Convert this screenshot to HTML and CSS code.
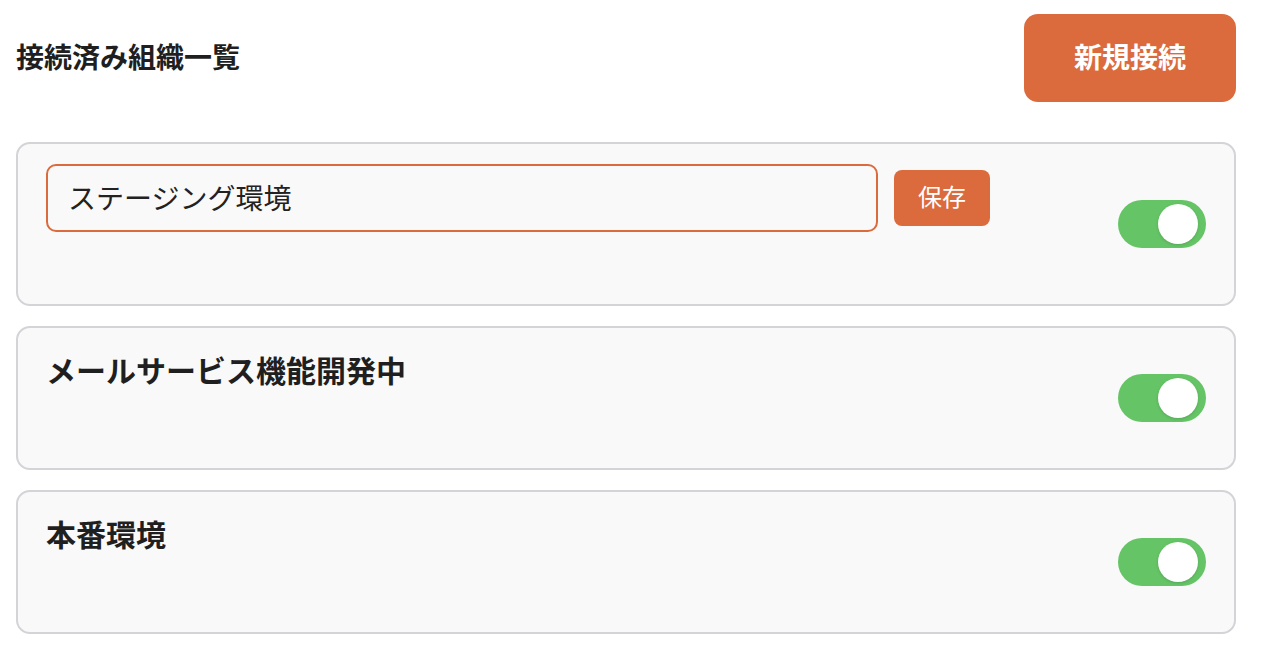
FILE: index.html
```html
<!DOCTYPE html>
<html lang="ja">
<head>
<meta charset="utf-8">
<title>接続済み組織一覧</title>
<link rel="stylesheet" href="styles.css">
</head>
<body>
<div class="page">
  <header class="header">
    <h1 class="title">接続済み組織一覧</h1>
    <button class="btn-primary" type="button">新規接続</button>
  </header>
  <div class="list">
    <div class="card">
      <div class="card-main">
        <div class="edit-row">
          <input class="name-input" type="text" value="ステージング環境">
          <button class="btn-save" type="button">保存</button>
        </div>
        <div class="card-meta"></div>
      </div>
      <span class="toggle"><span class="knob"></span></span>
    </div>
    <div class="card">
      <div class="card-main">
        <div class="card-title">メールサービス機能開発中</div>
        <div class="card-meta"></div>
      </div>
      <span class="toggle"><span class="knob"></span></span>
    </div>
    <div class="card">
      <div class="card-main">
        <div class="card-title">本番環境</div>
        <div class="card-meta"></div>
      </div>
      <span class="toggle"><span class="knob"></span></span>
    </div>
  </div>
</div>
</body>
</html>
```

FILE: styles.css
```css
* { box-sizing: border-box; }
html, body { margin: 0; padding: 0; background: #ffffff; }
body {
  font-family: "Noto Sans CJK JP", "Noto Sans", sans-serif;
  color: #222222;
}
.page {
  padding: 14px 28px 0 16px;
}
.header {
  display: flex;
  align-items: center;
  justify-content: space-between;
}
.title {
  margin: 0;
  padding-bottom: 4px;
  font-size: 28px;
  font-weight: 700;
  line-height: 40px;
  color: #1f1f1f;
}
.btn-primary {
  width: 212px;
  height: 88px;
  border: none;
  border-radius: 14px;
  background: #db6a3c;
  color: #ffffff;
  font-family: inherit;
  font-size: 28px;
  font-weight: 700;
  padding: 0 0 4px 0;
}
.list {
  margin-top: 40px;
  display: flex;
  flex-direction: column;
  gap: 20px;
}
.card {
  display: flex;
  align-items: center;
  justify-content: space-between;
  border: 2px solid #d4d4d8;
  border-radius: 14px;
  background: #f9f9f9;
  padding: 20px 28px;
}
.card-main {
  display: flex;
  flex-direction: column;
}
.card-title {
  font-size: 30px;
  font-weight: 700;
  line-height: 42px;
  height: 48px;
  padding-bottom: 6px;
  color: #1f1f1f;
}
.card-meta {
  height: 52px;
}
.edit-row {
  display: flex;
  align-items: center;
  gap: 16px;
}
.name-input {
  width: 832px;
  height: 68px;
  border: 2px solid #db6a3c;
  border-radius: 10px;
  background: #f9f9f9;
  padding: 0 20px 2px 20px;
  font-family: inherit;
  font-size: 28px;
  color: #222222;
  outline: none;
}
.btn-save {
  width: 96px;
  height: 56px;
  border: none;
  border-radius: 8px;
  background: #db6a3c;
  color: #ffffff;
  font-family: inherit;
  font-size: 24px;
  padding: 0 0 5px 0;
}
.toggle {
  position: relative;
  display: block;
  width: 88px;
  height: 48px;
  border-radius: 24px;
  background: #65c466;
  flex-shrink: 0;
}
.knob {
  position: absolute;
  top: 4px;
  right: 8px;
  width: 40px;
  height: 40px;
  border-radius: 50%;
  background: #ffffff;
  box-shadow: 0 1px 3px rgba(0,0,0,0.15);
}
```
